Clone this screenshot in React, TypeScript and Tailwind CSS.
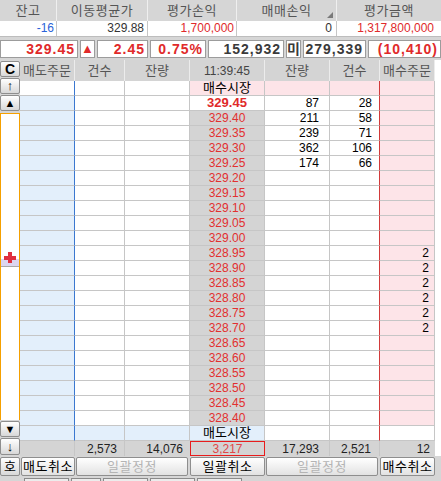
import clsx from 'clsx'

const font = "font-['Liberation_Sans','Noto_Sans_CJK_KR',sans-serif]"

const prices = Array.from({ length: 22 }, (_, i) => (329.45 - i * 0.05).toFixed(2))

const bids: Record<number, [string, string]> = {
  0: ['87', '28'],
  1: ['211', '58'],
  2: ['239', '71'],
  3: ['362', '106'],
  4: ['174', '66'],
}

const buyOrders: Record<number, string> = { 10: '2', 11: '2', 12: '2', 13: '2', 14: '2', 15: '2' }

const cols = ['w-[55px]', 'w-[50px]', 'w-[65px]', 'w-[75px]', 'w-[65px]', 'w-[50px]', 'w-[55px]']

const SideBtn = ({ children, className }: { children: React.ReactNode; className?: string }) => (
  <div
    className={clsx(
      'flex items-center justify-center rounded-[2px] border border-[#8e8e8e] bg-linear-to-b from-white to-[#d8d8d8] text-black',
      className
    )}
  >
    {children}
  </div>
)

const Btn = ({ children, disabled, className }: { children: React.ReactNode; disabled?: boolean; className?: string }) => (
  <div
    className={clsx(
      'flex h-full items-center justify-center rounded-[2px] border border-[#8e8e8e] bg-linear-to-b from-white to-[#e2e2e2] text-[13px] tracking-[0.5px]',
      disabled ? 'text-[#b4b4b4]' : 'text-black',
      className
    )}
  >
    {children}
  </div>
)

function OrderRow({ r }: { r: number }) {
  const isBuyMarket = r === 0
  const isSellMarket = r === 23
  const pi = r - 1
  const price = !isBuyMarket && !isSellMarket ? prices[pi] : ''
  const bid = bids[pi]
  const order = buyOrders[pi]
  const base = 'flex h-[15px] items-center border-b border-b-[#c6c6c6] border-r text-[12px] leading-[14px]'

  return (
    <div className="flex">
      <div className={clsx(base, cols[0], 'border-r-[#3b78d0]', isBuyMarket ? 'bg-white' : 'bg-[#e3effb]')} />
      <div className={clsx(base, cols[1], 'border-r-[#c6c6c6]', isSellMarket ? 'bg-[#e3effb]' : 'bg-white')} />
      <div className={clsx(base, cols[2], 'border-r-[#c6c6c6]', isSellMarket ? 'bg-[#e3effb]' : 'bg-white')} />
      <div
        className={clsx(
          base,
          cols[3],
          'justify-center border-r-[#c6c6c6]',
          isBuyMarket && 'bg-[#fde4e8] text-[13px] text-black',
          isSellMarket && 'bg-[#e3effb] text-[13px] text-black',
          r === 1 && 'bg-white text-[13px] font-bold text-[#e02a2a]',
          r > 1 && r < 23 && 'bg-[#d4d4d4] text-[#e23030]'
        )}
      >
        {isBuyMarket ? '매수시장' : isSellMarket ? '매도시장' : price}
      </div>
      <div className={clsx(base, cols[4], 'justify-end border-r-[#c6c6c6] pr-[10px] text-black', isBuyMarket ? 'bg-[#fde4e8]' : 'bg-white')}>
        {bid?.[0]}
      </div>
      <div className={clsx(base, cols[5], 'justify-end border-r-[#d23a3a] pr-[7px] text-black', isBuyMarket ? 'bg-[#fde4e8]' : 'bg-white')}>
        {bid?.[1]}
      </div>
      <div className={clsx(base, cols[6], 'justify-end border-r-[#c6c6c6] pr-[5px] text-black', isSellMarket ? 'bg-white' : 'bg-[#fde4e8]')}>
        {order}
      </div>
    </div>
  )
}

export default function App() {
  return (
    <div className={clsx('flex h-[481px] w-[441px] flex-col overflow-hidden bg-[#d6d6d6]', font)}>
      {/* 잔고 header */}
      <div className="flex h-[21px] text-[13px] tracking-[0.5px] text-[#555]">
        <div className="flex w-[57px] items-center justify-center border-r border-[#efefef]">잔고</div>
        <div className="flex w-[91px] items-center justify-center border-r border-[#efefef]">이동평균가</div>
        <div className="flex w-[89px] items-center justify-center border-r border-[#efefef]">평가손익</div>
        <div className="relative flex w-[100px] items-center justify-center border-r border-[#efefef]">
          매매손익
          <svg className="absolute right-[3px] bottom-[3px]" width="6" height="6" viewBox="0 0 6 6">
            <polygon points="6,0 6,6 0,6" fill="#7a7a7a" />
          </svg>
        </div>
        <div className="flex flex-1 items-center justify-center">평가금액</div>
      </div>
      <div className="flex h-[16px] border-b border-[#bdbdbd] bg-white text-[12px] leading-[15px]">
        <div className="flex w-[57px] items-center justify-end border-r border-[#c6c6c6] pr-[2px] text-[#2a62d8]">-16</div>
        <div className="flex w-[91px] items-center justify-end border-r border-[#c6c6c6] pr-[3px] text-[#333]">329.88</div>
        <div className="flex w-[89px] items-center justify-end border-r border-[#c6c6c6] pr-[2px] text-[#e02a2a]">1,700,000</div>
        <div className="flex w-[100px] items-center justify-end border-r border-[#c6c6c6] pr-[4px] text-[#333]">0</div>
        <div className="flex flex-1 items-center justify-end pr-[7px] text-[#e02a2a]">1,317,800,000</div>
      </div>
      <div className="h-[3px]" />
      <div className="flex h-[18px] gap-[2px] text-[14px] font-bold tracking-[1px]">
        <div className="flex w-[78px] items-center justify-end border border-[#9c9c9c] bg-white pr-[2px] text-[#e02a2a]">329.45</div>
        <div className="flex w-[15px] items-center justify-center border border-[#9c9c9c] bg-white text-[13px] tracking-normal text-[#e02a2a]">▲</div>
        <div className="flex w-[51px] items-center justify-end border border-[#9c9c9c] bg-white pr-[2px] text-[#e02a2a]">2.45</div>
        <div className="flex w-[56px] items-center justify-end border border-[#9c9c9c] bg-white pr-[2px] text-[#e02a2a]">0.75%</div>
        <div className="flex w-[76px] items-center justify-end border border-[#9c9c9c] bg-white pr-[2px] text-[#3a3a3a]">152,932</div>
        <div className="flex w-[15px] items-center justify-center border border-[#9c9c9c] bg-white tracking-normal text-[#3a3a3a]">미</div>
        <div className="flex w-[63px] items-center justify-end border border-[#9c9c9c] bg-white pr-[2px] text-[#3a3a3a]">279,339</div>
        <div className="flex flex-1 items-center justify-end border border-[#9c9c9c] bg-white pr-[2px] text-[#e02a2a]">(10,410)</div>
      </div>
      <div className="h-[2px]" />

      {/* 호가 */}
      <div className="flex h-[396px]">
        <div className="flex w-[20px] flex-col">
          <div className="h-[1px]" />
          <SideBtn className="h-[16px] text-[14px] font-bold">C</SideBtn>
          <div className="h-[1px]" />
          <SideBtn className="h-[16px] text-[13px]">↑</SideBtn>
          <div className="h-[1px]" />
          <SideBtn className="h-[16px] text-[11px]">▲</SideBtn>
          <div className="h-[2px]" />
          <div className="flex h-[307px] flex-col border-x border-t border-[#f5a000] bg-white">
            <div className="h-[138px]" />
            <div className="h-[14px] bg-[linear-gradient(to_bottom,white_50%,#dcd6f0_50%)]">
              <svg width="18" height="14" viewBox="0 0 18 14">
                <rect x="3" y="4" width="12" height="4" fill="#e03040" />
                <rect x="7" y="0" width="4" height="11" fill="#e03040" />
              </svg>
            </div>
            <div className="h-[1px] bg-[#a8a8a8]" />
            <div className="flex-1" />
          </div>
          <div className="h-[1px]" />
          <SideBtn className="h-[16px] text-[11px]">▼</SideBtn>
          <div className="h-[1px]" />
          <SideBtn className="h-[17px] text-[13px]">↓</SideBtn>
        </div>

        <div className="flex w-[415px] flex-col">
          <div className="flex h-[21px] bg-[#d4d4d4] text-[13px] text-[#555]">
            <div className={clsx(cols[0], 'flex items-center justify-center border-r border-[#ececec]')}>매도주문</div>
            <div className={clsx(cols[1], 'flex items-center justify-center border-r border-[#ececec]')}>건수</div>
            <div className={clsx(cols[2], 'flex items-center justify-center border-r border-[#ececec]')}>잔량</div>
            <div className={clsx(cols[3], 'flex items-center justify-center border-r border-[#ececec] text-[12px] text-[#444]')}>11:39:45</div>
            <div className={clsx(cols[4], 'flex items-center justify-center border-r border-[#ececec]')}>잔량</div>
            <div className={clsx(cols[5], 'flex items-center justify-center border-r border-[#ececec]')}>건수</div>
            <div className={clsx(cols[6], 'flex items-center justify-center border-r border-[#ececec]')}>매수주문</div>
          </div>
          {Array.from({ length: 24 }, (_, r) => (
            <OrderRow key={r} r={r} />
          ))}
          <div className="flex h-[15px] bg-[#d4d4d4] text-[12px] leading-[14px] text-[#222]">
            <div className={clsx(cols[0], 'border-r border-[#c6c6c6]')} />
            <div className={clsx(cols[1], 'flex items-center justify-end border-r border-[#c6c6c6] pr-[7px]')}>2,573</div>
            <div className={clsx(cols[2], 'flex items-center justify-end pr-[7px]')}>14,076</div>
            <div className={clsx(cols[3], 'flex items-center justify-center border border-[#e81c1c] text-[#e04848]')}>3,217</div>
            <div className={clsx(cols[4], 'flex items-center justify-end border-r border-[#c6c6c6] pr-[10px]')}>17,293</div>
            <div className={clsx(cols[5], 'flex items-center justify-end border-r border-[#c6c6c6] pr-[8px]')}>2,521</div>
            <div className={clsx(cols[6], 'flex items-center justify-end pr-[5px]')}>12</div>
          </div>
        </div>
        <div className="flex-1 bg-white" />
      </div>

      {/* buttons */}
      <div className="h-[1px]" />
      <div className="flex h-[19px]">
        <SideBtn className="h-[19px] w-[20px] text-[13px]">호</SideBtn>
        <div className="w-[1px]" />
        <div className="w-[54px]">
          <Btn>매도취소</Btn>
        </div>
        <div className="w-[1px]" />
        <div className="w-[112px]">
          <Btn disabled>일괄정정</Btn>
        </div>
        <div className="w-[2px]" />
        <div className="w-[75px]">
          <Btn>일괄취소</Btn>
        </div>
        <div className="w-[1px]" />
        <div className="w-[112px]">
          <Btn disabled>일괄정정</Btn>
        </div>
        <div className="w-[2px]" />
        <div className="w-[55px]">
          <Btn>매수취소</Btn>
        </div>
      </div>
      <div className="flex flex-1 items-end gap-[2px] pl-[24px]">
        <div className="h-[3px] w-[45px] border-x border-t border-[#8a8a8a] bg-[#ececec]" />
        <div className="h-[3px] w-[30px] border-x border-t border-[#8a8a8a] bg-[#ececec]" />
        <div className="h-[3px] w-[45px] border-x border-t border-[#8a8a8a] bg-[#ececec]" />
        <div className="h-[3px] w-[45px] border-x border-t border-[#8a8a8a] bg-[#ececec]" />
        <div className="h-[3px] w-[45px] border-x border-t border-[#8a8a8a] bg-[#ececec]" />
      </div>
    </div>
  )
}
